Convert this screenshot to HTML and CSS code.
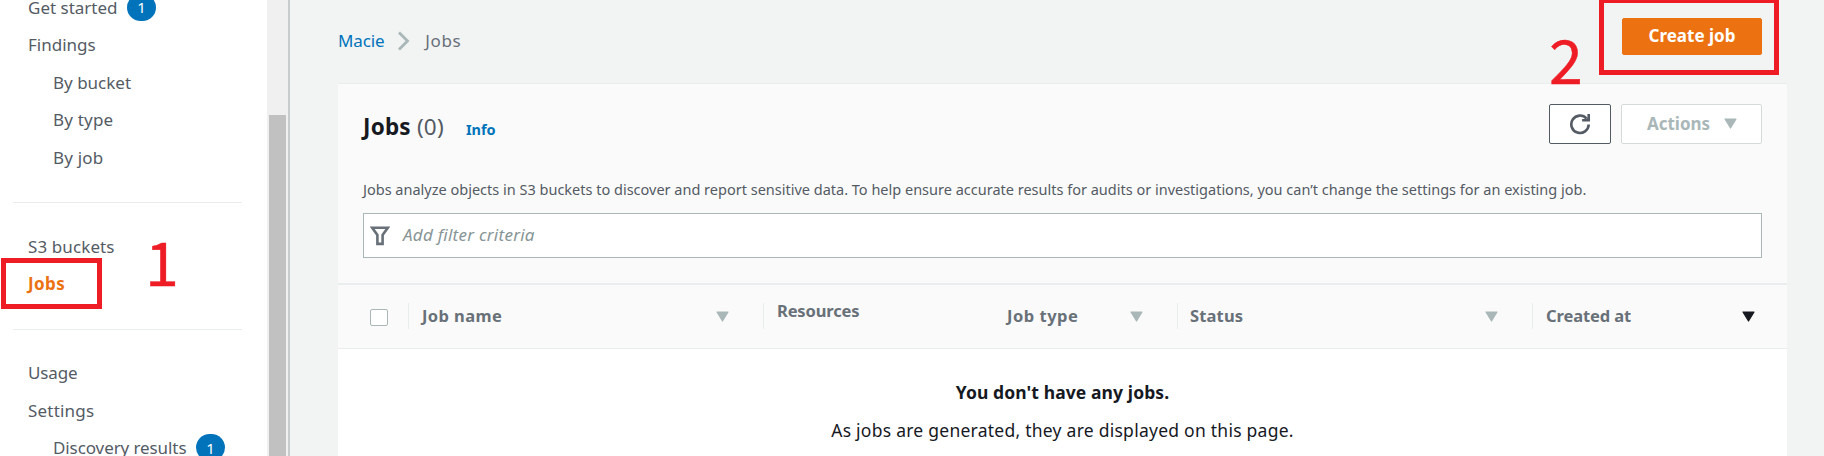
FILE: index.html
```
<!DOCTYPE html>
<html lang="en">
<head>
<meta charset="utf-8">
<title>Macie - Jobs</title>
<link rel="stylesheet" href="styles.css">
</head>
<body>
<div class="app">
  <aside class="sidebar">
    <nav class="nav">
      <ul class="nav-group">
        <li><a class="t-started">Get started</a><span class="badge">1</span></li>
        <li><a>Findings</a></li>
        <li class="sub"><a>By bucket</a></li>
        <li class="sub"><a class="wide">By type</a></li>
        <li class="sub"><a class="wide">By job</a></li>
      </ul>
      <ul class="nav-group">
        <li><a class="t-buckets">S3 buckets</a></li>
        <li class="active"><a>Jobs</a></li>
      </ul>
      <ul class="nav-group">
        <li><a class="t-usage">Usage</a></li>
        <li><a class="wide">Settings</a></li>
        <li class="sub"><a class="t-discovery">Discovery results</a><span class="badge">1</span></li>
      </ul>
    </nav>
    <div class="scrollbar"><div class="thumb"></div></div>
  </aside>

  <main class="main">
    <header class="topbar">
      <div class="breadcrumb">
        <a class="crumb-link">Macie</a>
        <svg class="chevron" width="14" height="20" viewBox="0 0 14 20"><path d="M2 1.5 10.5 10 2 18.5" fill="none" stroke="#aab7b8" stroke-width="2.8"/></svg>
        <span class="crumb-current">Jobs</span>
      </div>
      <button class="btn primary">Create job</button>
    </header>

    <section class="panel">
      <div class="panel-head">
        <div class="title-row">
          <h1 class="title">Jobs <span class="count">(0)</span></h1>
          <a class="info">Info</a>
          <div class="tools">
            <button class="btn refresh" aria-label="Refresh">
              <svg width="22" height="22" viewBox="0 0 22 22" fill="none" stroke="#545b64" stroke-width="2.6"><path d="M19.7 11.5A8.7 8.7 0 1 1 17.6 5.6"/><path d="M19.7 1v6.2h-6.6" /><path d="M16.5 7.2 20 3.6v3.6z" fill="#545b64" stroke="none"/></svg>
            </button>
            <button class="btn actions">Actions
              <svg class="caret" width="13" height="11" viewBox="0 0 13 11"><path d="M1 1h11L6.5 10z"/></svg>
            </button>
          </div>
        </div>
        <p class="desc">Jobs analyze objects in S3 buckets to discover and report sensitive data. To help ensure accurate results for audits or investigations, you can’t change the settings for an existing job.</p>
        <div class="filter">
          <svg width="20" height="20" viewBox="0 0 20 20" fill="none" stroke="#687078" stroke-width="2.6"><path d="M2.2 1.8h15.6L12.6 9v8.9H7.4V9z"/></svg>
          <span class="placeholder">Add filter criteria</span>
        </div>
      </div>

      <div class="table-head">
        <div class="cell check"><span class="checkbox"></span></div>
        <div class="cell sep name"><span>Job name</span><svg class="caret" width="13" height="11" viewBox="0 0 13 11"><path d="M1 1h11L6.5 10z"/></svg></div>
        <div class="cell sep resources"><span>Resources</span></div>
        <div class="cell type"><span>Job type</span><svg class="caret" width="13" height="11" viewBox="0 0 13 11"><path d="M1 1h11L6.5 10z"/></svg></div>
        <div class="cell sep status"><span>Status</span><svg class="caret" width="13" height="11" viewBox="0 0 13 11"><path d="M1 1h11L6.5 10z"/></svg></div>
        <div class="cell sep created"><span>Created at</span><svg class="caret dark" width="13" height="11" viewBox="0 0 13 11"><path d="M1 1h11L6.5 10z"/></svg></div>
      </div>

      <div class="empty">
        <p class="empty-title">You don't have any jobs.</p>
        <p class="empty-text">As jobs are generated, they are displayed on this page.</p>
      </div>
    </section>
  </main>

  <div class="mark box-jobs"></div>
  <div class="mark box-create"></div>
  <span class="step step-one">1</span>
  <span class="step step-two">2</span>
</div>
</body>
</html>
```
FILE: styles.css
```
* { box-sizing: border-box; }
body {
  margin: 0;
  background: #f2f3f3;
  color: #16191f;
  font-family: "Noto Sans", "Open Sans", sans-serif;
  font-size: 17px;
}
ul, p, h1 { margin: 0; padding: 0; }
li { list-style: none; }
svg { display: block; flex: none; }

.app { position: relative; display: flex; width: 1824px; height: 456px; overflow: hidden; }

.sidebar { display: flex; flex: none; width: 290px; background: #fff; border-right: 2px solid #c8cccc; }
.nav { width: 267px; padding-left: 13px; padding-right: 25px; margin-top: -11.5px; }
.nav-group { padding-bottom: 26px; color: #545b64; }
.nav-group + .nav-group { border-top: 1px solid #eaeded; padding-top: 24.5px; }
.nav-group li { display: flex; align-items: center; height: 37.5px; padding-left: 15px; white-space: nowrap; }
.nav-group li.sub { padding-left: 40px; }
.nav-group li.active { color: #ec7211; font-weight: 700; letter-spacing: .4px; }
.wide { letter-spacing: .2px; }
.t-buckets { letter-spacing: .1px; }
.t-usage { letter-spacing: -.15px; }
.t-discovery { letter-spacing: -.09px; }
.badge {
  display: flex; align-items: center; justify-content: center;
  width: 29px; height: 27px; margin-left: 9.5px;
  border-radius: 14px; background: #0073bb; color: #fff; font-size: 15px;
}
.scrollbar { width: 21px; padding: 115px 2px 0; background: #f0f0f0; }
.thumb { width: 17px; height: 341px; background: #c1c1c1; }

.main { flex: none; width: 1497px; padding-left: 48px; }
.topbar { display: flex; align-items: flex-start; justify-content: space-between; height: 83px; padding: 18px 25px 0 0; }
.breadcrumb { display: flex; align-items: center; height: 45px; }
.crumb-link { padding-bottom: 1px; color: #0073bb; letter-spacing: -.15px; }
.chevron { margin-left: 13px; margin-right: 14px; }
.crumb-current { padding-bottom: 1px; color: #687078; letter-spacing: .6px; }

.btn {
  display: flex; align-items: center; justify-content: center;
  padding: 0; border: 1px solid #545b64; border-radius: 2px; background: #fff;
  font: 700 17px "Noto Sans", sans-serif;
}
.primary { width: 140px; height: 37px; padding-bottom: 2px; border-color: #ec7211; background: #ec7211; color: #fff; }
.refresh { width: 62px; height: 40px; }
.actions { width: 141px; height: 40px; padding: 0 0 2px 1px; gap: 14px; border-color: #d5dbdb; color: #aab7b8; }

.panel { height: 373px; border-top: 1px solid #eaeded; background: #fff; }
.panel-head { height: 199px; padding: 20px 25px 0; background: #fafafa; }
.title-row { display: flex; align-items: flex-start; height: 72px; }
.title { font-size: 22.5px; line-height: 46px; font-weight: 700; letter-spacing: .2px; }
.count { color: #545b64; font-weight: 400; }
.info { margin-left: 22px; color: #0073bb; font-size: 14.5px; line-height: 51px; font-weight: 700; }
.tools { display: flex; gap: 10px; margin-left: auto; }
.desc { height: 37px; color: #545b64; font-size: 14.5px; line-height: 27px; white-space: nowrap; }
.filter { display: flex; align-items: center; gap: 13px; height: 45px; padding-left: 6px; border: 1px solid #aab7b8; background: #fff; }
.placeholder { padding-bottom: 2px; color: #879596; font-style: italic; letter-spacing: .25px; }

.table-head {
  display: flex; height: 66px; padding: 18px 25px 0 32px;
  border-top: 2px solid #eaeded; border-bottom: 1px solid #eaeded;
  background: #fafafa; color: #687078; font-size: 16.5px; font-weight: 700;
}
.cell { display: flex; align-items: center; justify-content: space-between; flex: none; height: 26px; white-space: nowrap; }
.cell > span:not(.checkbox) { padding-bottom: 2px; }
.sep { border-left: 1px solid #eaeded; }
.check { width: 38px; }
.checkbox { width: 18px; height: 17px; border: 1px solid #aab7b8; border-radius: 2px; background: #fff; margin-top: 3px; }
.name { width: 355px; padding: 0 34px 0 13px; letter-spacing: .4px; }
.resources { width: 230px; padding-left: 13px; padding-bottom: 10px; letter-spacing: -.15px; }
.type { width: 184px; padding: 0 34px 0 14px; letter-spacing: .5px; }
.status { width: 355px; padding: 0 34px 0 12px; letter-spacing: .15px; }
.created { width: 230px; padding: 0 7px 0 13px; letter-spacing: -.1px; }
.caret { fill: #aab7b8; stroke: #aab7b8; stroke-width: 1.2; stroke-linejoin: round; }
.caret.dark { fill: #16191f; stroke: #16191f; }

.empty { padding-top: 24px; text-align: center; font-size: 17.5px; line-height: 38px; }
.empty-title { font-weight: 700; letter-spacing: .1px; }
.empty-text { letter-spacing: .25px; }

.mark { position: absolute; border: 5px solid #ee1c24; }
.box-jobs { left: 1px; top: 258px; width: 101px; height: 51px; }
.box-create { left: 1599px; top: -2px; width: 180px; height: 77px; }
.step { position: absolute; color: #ee1c24; font: 61px/60px "Noto Sans CJK SC", sans-serif; -webkit-text-stroke: .4px #ee1c24; }
.step-one { left: 145px; top: 230px; }
.step-two { left: 1549px; top: 28px; }
```
